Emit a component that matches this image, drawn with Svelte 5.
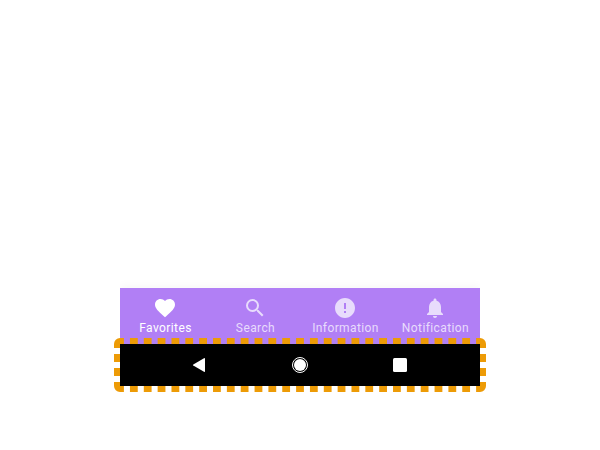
<script>
  const tabs = [
    { label: 'Favorites', d: 'M12 21.35l-1.45-1.32C5.4 15.36 2 12.28 2 8.5 2 5.42 4.42 3 7.5 3c1.74 0 3.41.81 4.5 2.09C13.09 3.81 14.76 3 16.5 3 19.58 3 22 5.42 22 8.5c0 3.78-3.4 6.86-8.55 11.54L12 21.35z' },
    { label: 'Search', d: 'M15.5 14h-.79l-.28-.27A6.471 6.471 0 0 0 16 9.5 6.5 6.5 0 1 0 9.5 16c1.61 0 3.09-.59 4.23-1.57l.27.28v.79l5 4.99L20.49 19l-4.99-5zm-6 0C7.01 14 5 11.99 5 9.5S7.01 5 9.5 5 14 7.01 14 9.5 11.99 14 9.5 14z' },
    { label: 'Information', d: 'M12 2C6.48 2 2 6.48 2 12s4.48 10 10 10 10-4.48 10-10S17.52 2 12 2zm1 15h-2v-2h2v2zm0-4h-2V7h2v6z' },
    { label: 'Notification', d: 'M12 22c1.1 0 2-.9 2-2h-4c0 1.1.89 2 2 2zm6-6v-5c0-3.07-1.64-5.64-4.5-6.32V4c0-.83-.67-1.5-1.5-1.5s-1.5.67-1.5 1.5v.68C7.63 5.36 6 7.92 6 11v5l-2 2v1h16v-1l-2-2z' }
  ];
  let active = $state(0);
</script>

<main>
  <section class="device">
    <nav class="tabs">
      {#each tabs as tab, i}
        <button class:active={active === i} onclick={() => (active = i)}>
          <svg width="24" height="24" viewBox="0 0 24 24"><path d={tab.d} /></svg>
          <span>{tab.label}</span>
        </button>
      {/each}
    </nav>
    <div class="system">
      <svg width="14" height="16" viewBox="0 0 14 16"><path d="M1.3 7.5 12 1.2q1-.5 1 .5v12.6q0 1-1 .5L1.3 8.5q-.8-.5 0-1z" /></svg>
      <svg width="16" height="16" viewBox="0 0 16 16"><circle cx="8" cy="8" r="7.5" fill="none" stroke="#fff" /><circle cx="8" cy="8" r="6" /></svg>
      <svg width="14" height="14" viewBox="0 0 14 14"><rect width="14" height="14" rx="1.5" /></svg>
      <svg class="outline" width="372" height="54" viewBox="0 0 372 54">
        <path d="M9.9 3H6a3 3 0 0 0-3 3v4M362.1 3H366a3 3 0 0 1 3 3v4M9.9 51H6a3 3 0 0 1-3-3v-4M362.1 51H366a3 3 0 0 0 3-3v-4" />
        <path stroke-dasharray="7.8 6.046" d="M15.95 3H360M15.95 51H360" />
        <path stroke-dasharray="7.8 6.2" d="M3 16.1V38M369 16.1V38" />
      </svg>
    </div>
  </section>
</main>

<style>
  :global(body) { background: #fff; }
  main {
    box-sizing: border-box;
    height: 450px;
    padding-top: 288px;
    overflow: hidden;
  }
  .device { width: 360px; margin: 0 auto; }
  .tabs {
    display: flex;
    height: 56px;
    background: #b17ff5;
    box-shadow: 0 -3px 8px rgba(0, 0, 0, 0.03);
    clip-path: inset(-12px 0 0);
  }
  button {
    flex: 1 1 0;
    min-width: 0;
    display: flex;
    flex-direction: column;
    align-items: center;
    border: 0;
    padding: 8px 0 0;
    background: none;
    color: #e8dcfc;
    font: 12px/14px Roboto, sans-serif;
    letter-spacing: 0.4px;
    white-space: nowrap;
  }
  button.active { color: #fff; }
  button svg { fill: currentColor; }
  button span { margin-top: 1px; padding-left: 1px; }
  .system {
    position: relative;
    display: flex;
    align-items: center;
    height: 42px;
    box-sizing: border-box;
    justify-content: space-between;
    padding: 0 73px 0 72px;
    background: #000;
    fill: #fff;
  }
  .outline {
    position: absolute;
    left: -6px;
    top: -6px;
    fill: none;
    stroke: #ed9b06;
    stroke-width: 6;
  }
</style>
